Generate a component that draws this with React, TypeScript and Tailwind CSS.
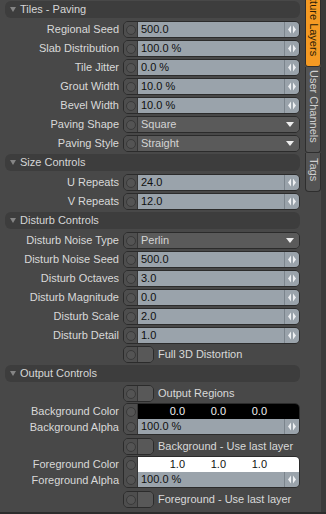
import React from "react";

function Circle() {
  return (
    <div className="flex h-full w-[14px] shrink-0 items-center justify-center border-r border-[#363636] bg-[#4e4e4e]">
      <div className="h-[10px] w-[10px] rounded-full border border-[#3a3a3a] bg-[#545454]" />
    </div>
  );
}

function Arrows() {
  return (
    <div className="flex h-full w-[15px] shrink-0 items-center justify-center border-l border-[#7b848c] bg-[#9aa3ab]">
      <svg width="8" height="9" viewBox="0 0 8 9">
        <polygon points="3,0.5 3,8.5 0,4.5" fill="#eef0f2" />
        <polygon points="5,0.5 5,8.5 8,4.5" fill="#eef0f2" />
      </svg>
    </div>
  );
}

function Label({ children }: { children?: React.ReactNode }) {
  return (
    <div className="w-[119px] shrink-0 whitespace-nowrap text-right text-[11px] text-[#d9d9d9]">
      {children}
    </div>
  );
}

function Header({ title }: { title: string }) {
  return (
    <div className="px-[5px] pt-[1px] pb-[2px]">
      <div className="flex h-[17px] items-center rounded-[6px] bg-[#3d3d3d] pl-[5px] text-[11px] text-[#d6d6d6]">
        <svg width="6" height="5" viewBox="0 0 6 5">
          <polygon points="0,0 6,0 3,5" fill="#858585" />
        </svg>
        <span className="ml-[4px]">{title}</span>
      </div>
    </div>
  );
}

function NumRow({ label, value }: { label: string; value: string }) {
  return (
    <div className="flex h-[19px] items-center">
      <Label>{label}</Label>
      <div className="ml-[4px] flex h-[17px] w-[177px] overflow-hidden rounded-[5px] border border-[#2b2b2b]">
        <Circle />
        <div className="flex flex-1 items-center bg-[#9aa3ab] pl-[3px] text-[11px] text-[#101010]">
          {value}
        </div>
        <Arrows />
      </div>
    </div>
  );
}

function DropRow({ label, value }: { label: string; value: string }) {
  return (
    <div className="flex h-[19px] items-center">
      <Label>{label}</Label>
      <div className="ml-[4px] flex h-[17px] w-[177px] overflow-hidden rounded-[5px] border border-[#2b2b2b]">
        <Circle />
        <div className="flex flex-1 items-center justify-between bg-[#5a5a5a] pl-[3px] pr-[5px] text-[11px] text-[#d4d4d4]">
          <span>{value}</span>
          <svg width="8" height="5" viewBox="0 0 8 5">
            <polygon points="0,0 8,0 4,5" fill="#eeeeee" />
          </svg>
        </div>
      </div>
    </div>
  );
}

function ToggleRow({ label }: { label: string }) {
  return (
    <div className="flex h-[19px] items-center">
      <div className="w-[119px] shrink-0" />
      <div className="ml-[4px] flex h-[17px] w-[31px] overflow-hidden rounded-[5px] border border-[#2b2b2b]">
        <Circle />
        <div className="flex-1 bg-[#585858]" />
      </div>
      <span className="ml-[4px] whitespace-nowrap text-[11px] text-[#d9d9d9]">{label}</span>
    </div>
  );
}

function ColorRows({
  colorLabel,
  alphaLabel,
  white,
  values,
  alpha,
}: {
  colorLabel: string;
  alphaLabel: string;
  white: boolean;
  values: string[];
  alpha: string;
}) {
  return (
    <div className="flex h-[34px] items-start">
      <div className="flex w-[119px] shrink-0 flex-col whitespace-nowrap text-right text-[11px] text-[#d9d9d9]">
        <div className="h-[16px] leading-[16px]">{colorLabel}</div>
        <div className="h-[16px] leading-[16px]">{alphaLabel}</div>
      </div>
      <div className="ml-[4px] flex h-[32px] w-[177px] flex-col overflow-hidden rounded-[5px] border border-[#2b2b2b]">
        <div className="flex h-[15px]">
          <Circle />
          <div
            className={
              white
                ? "flex flex-1 items-center bg-white pl-[6px] text-[11px] text-[#111111]"
                : "flex flex-1 items-center bg-black pl-[6px] text-[11px] text-[#f0f0f0]"
            }
          >
            {values.map((v, i) => (
              <span key={i} className="w-[41px] text-right">
                {v}
              </span>
            ))}
          </div>
        </div>
        <div className="flex flex-1">
          <Circle />
          <div className="flex flex-1 items-center bg-[#9aa3ab] pl-[3px] text-[11px] text-[#101010]">
            {alpha}
          </div>
          <Arrows />
        </div>
      </div>
    </div>
  );
}

export default function App() {
  return (
    <div className="flex h-[514px] w-[326px] overflow-hidden border-b-2 border-[#2c2c2c] bg-[#484848] font-['Liberation_Sans',Arial,sans-serif] leading-none">
      <div className="flex w-[305px] shrink-0 flex-col">
        <Header title="Tiles - Paving" />
        <NumRow label="Regional Seed" value="500.0" />
        <NumRow label="Slab Distribution" value="100.0 %" />
        <NumRow label="Tile Jitter" value="0.0 %" />
        <NumRow label="Grout Width" value="10.0 %" />
        <NumRow label="Bevel Width" value="10.0 %" />
        <DropRow label="Paving Shape" value="Square" />
        <DropRow label="Paving Style" value="Straight" />
        <Header title="Size Controls" />
        <NumRow label="U Repeats" value="24.0" />
        <NumRow label="V Repeats" value="12.0" />
        <Header title="Disturb Controls" />
        <DropRow label="Disturb Noise Type" value="Perlin" />
        <NumRow label="Disturb Noise Seed" value="500.0" />
        <NumRow label="Disturb Octaves" value="3.0" />
        <NumRow label="Disturb Magnitude" value="0.0" />
        <NumRow label="Disturb Scale" value="2.0" />
        <NumRow label="Disturb Detail" value="1.0" />
        <ToggleRow label="Full 3D Distortion" />
        <Header title="Output Controls" />
        <ToggleRow label="Output Regions" />
        <ColorRows
          colorLabel="Background Color"
          alphaLabel="Background Alpha"
          white={false}
          values={["0.0", "0.0", "0.0"]}
          alpha="100.0 %"
        />
        <ToggleRow label="Background - Use last layer" />
        <ColorRows
          colorLabel="Foreground Color"
          alphaLabel="Foreground Alpha"
          white={true}
          values={["1.0", "1.0", "1.0"]}
          alpha="100.0 %"
        />
        <ToggleRow label="Foreground - Use last layer" />
      </div>
      <div className="flex w-[16px] shrink-0 flex-col overflow-hidden">
        <div className="-mt-[24px] h-[91px] shrink-0 rounded-b-[3px] border border-[#2e2e2e] bg-[#f59a23] pt-[7px] text-[11px] text-[#2a1c08] [writing-mode:vertical-rl] flex items-center">
          Texture Layers
        </div>
        <div className="h-[86px] shrink-0 rounded-b-[3px] border border-t-0 border-[#2e2e2e] bg-[#545454] pt-[3px] text-[11px] text-[#cfcfcf] [writing-mode:vertical-rl] flex items-center">
          User Channels
        </div>
        <div className="h-[39px] shrink-0 rounded-b-[4px] border border-t-0 border-[#2e2e2e] bg-[#545454] pt-[5px] text-[11px] text-[#cfcfcf] [writing-mode:vertical-rl] flex items-center">
          Tags
        </div>
      </div>
      <div className="flex-1 bg-[#3a3a3a]" />
    </div>
  );
}
